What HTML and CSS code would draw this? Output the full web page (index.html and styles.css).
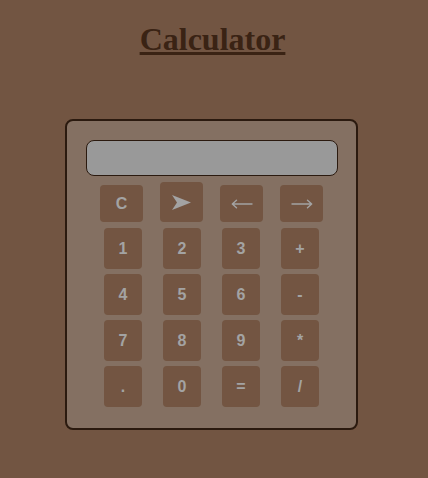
FILE: index.html
```html
<!DOCTYPE html>
<html lang="en">
<head>
<meta charset="utf-8">
<title>Calculator</title>
<link rel="stylesheet" href="styles.css">
</head>
<body>
<h1 class="title">Calculator</h1>
<div class="calc">
  <div class="display"></div>
  <div class="row row-top">
    <button class="key key-top">C</button>
    <button class="key key-top key-tall"><svg class="icon" width="19" height="15" viewBox="0 0 19 15"><polygon points="0,0 19,7.5 0,15 5,7.5" fill="#a3a3a3"/></svg></button>
    <button class="key key-top" aria-label="left"><svg class="icon" width="22" height="10" viewBox="0 0 22 10"><path d="M1.5 5H21M5.5 1.2L1.3 5L5.5 8.8" fill="none" stroke="#a3a3a3" stroke-width="1.4" stroke-linecap="round" stroke-linejoin="round"/></svg></button>
    <button class="key key-top" aria-label="right"><svg class="icon" width="22" height="10" viewBox="0 0 22 10"><path d="M1 5H20.5M16.5 1.2L20.7 5L16.5 8.8" fill="none" stroke="#a3a3a3" stroke-width="1.4" stroke-linecap="round" stroke-linejoin="round"/></svg></button>
  </div>
  <div class="row">
    <button class="key">1</button><button class="key">2</button><button class="key">3</button><button class="key">+</button>
  </div>
  <div class="row">
    <button class="key">4</button><button class="key">5</button><button class="key">6</button><button class="key">-</button>
  </div>
  <div class="row">
    <button class="key">7</button><button class="key">8</button><button class="key">9</button><button class="key">*</button>
  </div>
  <div class="row">
    <button class="key">.</button><button class="key">0</button><button class="key">=</button><button class="key">/</button>
  </div>
</div>
</body>
</html>
```
FILE: styles.css
```css
html, body {
  margin: 0;
  background: #725542;
}
body {
  padding: 8px;
  font-family: "Liberation Serif", serif;
}
.title {
  margin: 13px 0 0;
  padding-right: 3px;
  text-align: center;
  font-size: 32px;
  font-weight: bold;
  color: #3a2314;
  text-decoration: underline;
  line-height: 37px;
}
.calc {
  width: 289px;
  margin: 61px 0 0 57px;
  border: 2px solid #2b1a0f;
  border-radius: 8px;
  background: #847062;
  padding: 19px 0 21px;
  display: flex;
  flex-direction: column;
  align-items: center;
}
.display {
  width: 250px;
  height: 34px;
  background: #999999;
  border: 1px solid #2b1a0f;
  border-radius: 8px;
}
.row {
  display: flex;
  gap: 21px;
  margin-top: 5px;
}
.row-top {
  gap: 17px;
  align-items: flex-end;
  margin-top: 6px;
  margin-bottom: 1px;
}
.key {
  width: 38px;
  height: 41px;
  border: none;
  border-radius: 4px;
  background: #735542;
  color: #a3a3a3;
  font-family: "Liberation Sans", Arial, sans-serif;
  font-weight: bold;
  font-size: 16px;
  padding: 0;
  display: flex;
  align-items: center;
  justify-content: center;
}
.key-top {
  width: 43px;
  height: 37px;
}
.key-tall {
  height: 40px;
}
.icon {
  display: block;
}
```
